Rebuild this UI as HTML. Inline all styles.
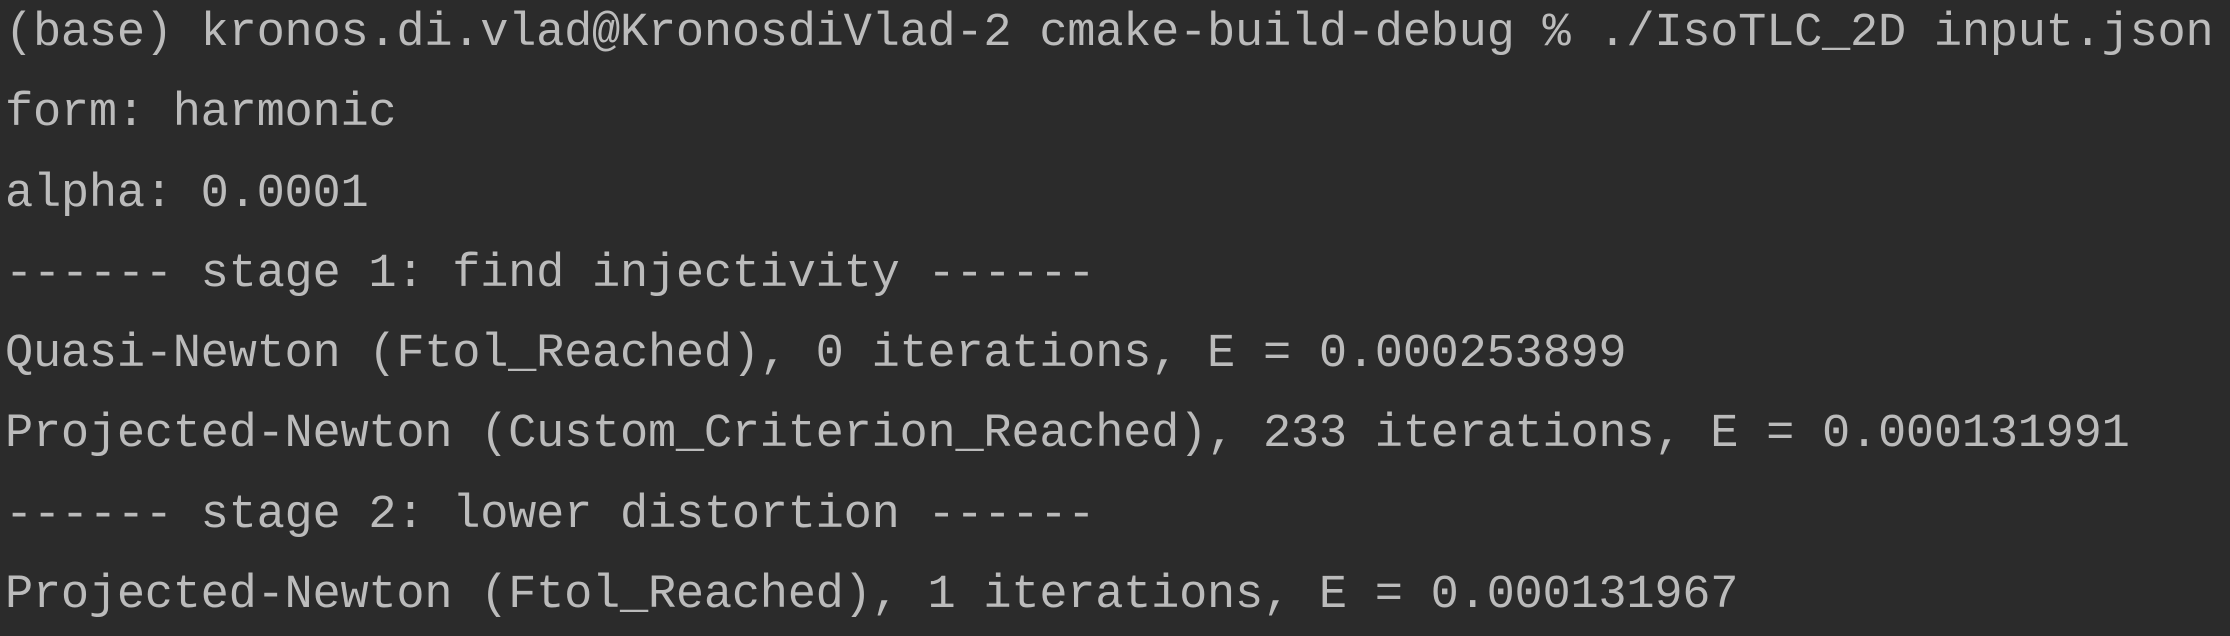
<!DOCTYPE html>
<html><head><meta charset="utf-8"><style>
html,body{margin:0;padding:0;background:#2b2b2b;width:2230px;height:634px;overflow:hidden}
pre{margin:0;position:absolute;left:5px;top:-6px;font-family:"Liberation Mono","DejaVu Sans Mono",monospace;font-size:47px;line-height:80.3px;color:#bbbbbb;letter-spacing:-0.25px}
</style></head><body><pre>(base) kronos.di.vlad@KronosdiVlad-2 cmake-build-debug % ./IsoTLC_2D input.json
form: harmonic
alpha: 0.0001
------ stage 1: find injectivity ------
Quasi-Newton (Ftol_Reached), 0 iterations, E = 0.000253899
Projected-Newton (Custom_Criterion_Reached), 233 iterations, E = 0.000131991
------ stage 2: lower distortion ------
Projected-Newton (Ftol_Reached), 1 iterations, E = 0.000131967</pre></body></html>
